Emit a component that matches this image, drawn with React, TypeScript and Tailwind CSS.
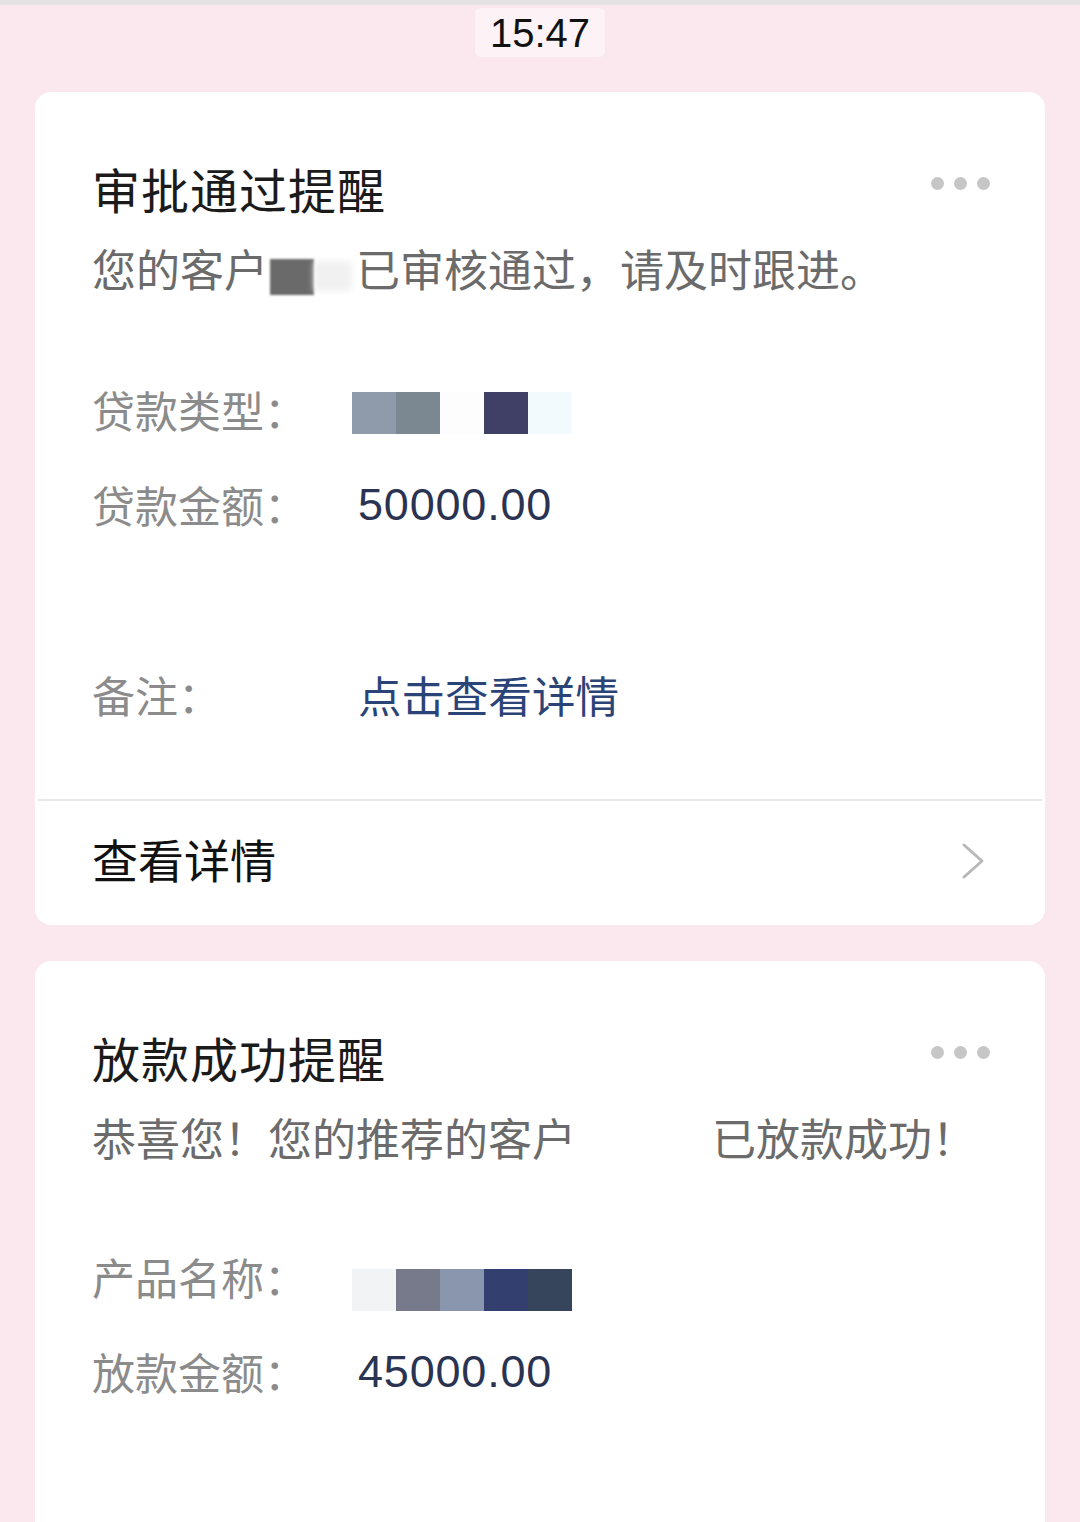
const cjk = "font-['Noto_Sans_CJK_SC','Noto_Sans',sans-serif]";

type Row = { label: string; kind: "blocks" | "amount" | "link" | "empty"; value?: string; colors?: string[]; shift?: string };

const cards: { title: string; sub: React.ReactNode; rows: Row[]; footer: boolean }[] = [
  {
    title: "审批通过提醒",
    sub: (
      <>
        您的客户
        <span className="inline-block w-[88px] h-[44px] align-middle relative">
          <span className="absolute left-[2px] top-[6px] w-[44px] h-[36px] bg-[#6a6a6a] blur-[1px]" />
          <span className="absolute left-[46px] top-[8px] w-[38px] h-[30px] bg-[#f1f1f1] blur-[3px]" />
        </span>
        已审核通过，请及时跟进。
      </>
    ),
    rows: [
      { label: "贷款类型：", kind: "blocks", shift: "mt-[6px]", colors: ["#8f9aab", "#7b8791", "#fdfdfd", "#403f66", "#f3fafd"] },
      { label: "贷款金额：", kind: "amount", value: "50000.00" },
      { label: "", kind: "empty" },
      { label: "备注：", kind: "link", value: "点击查看详情" },
    ],
    footer: true,
  },
  {
    title: "放款成功提醒",
    sub: (
      <>
        恭喜您！您的推荐的客户
        <span className="inline-block w-[136px]" />
        已放款成功！
      </>
    ),
    rows: [
      { label: "产品名称：", kind: "blocks", shift: "mt-[26px]", colors: ["#f2f3f4", "#767a8a", "#8a96ae", "#333f6e", "#36455c"] },
      { label: "放款金额：", kind: "amount", value: "45000.00" },
      { label: "", kind: "empty" },
      { label: "", kind: "empty" },
    ],
    footer: false,
  },
];

const Dots = () => (
  <div className="flex gap-[10px] mt-[-10px]">
    <span className="w-[13px] h-[13px] rounded-full bg-[#c6c6c6]" />
    <span className="w-[13px] h-[13px] rounded-full bg-[#c6c6c6]" />
    <span className="w-[13px] h-[13px] rounded-full bg-[#c6c6c6]" />
  </div>
);

const App = () => {
  return (
    <div className={`w-[1080px] h-[1522px] overflow-hidden bg-[#fbe8ee] ${cjk}`}>
      <div className="h-[5px] bg-[#e4e2e3]" />
      <div className="flex justify-center mt-[3px]">
        <div className="h-[49px] w-[130px] flex items-center justify-center bg-[#fdf3f6] rounded-[6px] font-['Liberation_Sans',sans-serif] text-[40px] text-[#111]">
          15:47
        </div>
      </div>

      <div className="flex flex-col gap-[36px] mt-[35px] px-[35px]">
        {cards.map((card) => (
          <div key={card.title} className="bg-white rounded-[16px] shrink-0">
            <div className="pl-[57px] pr-[55px] pt-[67px]">
              <div className="flex justify-between items-center">
                <h2 className="text-[48px] leading-[58px] text-[#1b1b1b] font-normal tracking-[1px]">{card.title}</h2>
                <Dots />
              </div>
              <p className="mt-[24px] text-[44px] leading-[54px] text-[#6b6b6b] whitespace-nowrap">{card.sub}</p>
              <div className="mt-[65px] flex flex-col">
                {card.rows.map((row, i) => (
                  <div key={i} className="h-[95px] flex items-center">
                    <span className="w-[266px] text-[43px] text-[#8b8b8b]">{row.label}</span>
                    {row.kind === "blocks" && (
                      <div className={`flex -ml-[6px] blur-[0.6px] ${row.shift}`}>
                        {row.colors!.map((c, j) => (
                          <span key={j} className="w-[44px] h-[42px]" style={{ background: c }} />
                        ))}
                      </div>
                    )}
                    {row.kind === "amount" && (
                      <span className="font-['Liberation_Sans',sans-serif] text-[45px] tracking-[0.8px] text-[#2a3452]">{row.value}</span>
                    )}
                    {row.kind === "link" && <span className="text-[43.5px] text-[#2b4478]">{row.value}</span>}
                  </div>
                ))}
              </div>
            </div>
            {card.footer && (
              <>
                <div className="mt-[57px] mx-[3px] h-[2px] bg-[#e8e8e8]" />
                <div className="h-[124px] flex items-center justify-between pl-[57px] pr-[60px]">
                  <span className="text-[46px] leading-[56px] text-[#111] mt-[-10px]">查看详情</span>
                  <svg width="24" height="38" viewBox="0 0 24 38" className="mt-[-4px]">
                    <polyline points="3,3 21,19 3,35" fill="none" stroke="#b8b8b8" strokeWidth="3" strokeLinecap="round" strokeLinejoin="round" />
                  </svg>
                </div>
              </>
            )}
          </div>
        ))}
      </div>
    </div>
  );
};

export default App;
